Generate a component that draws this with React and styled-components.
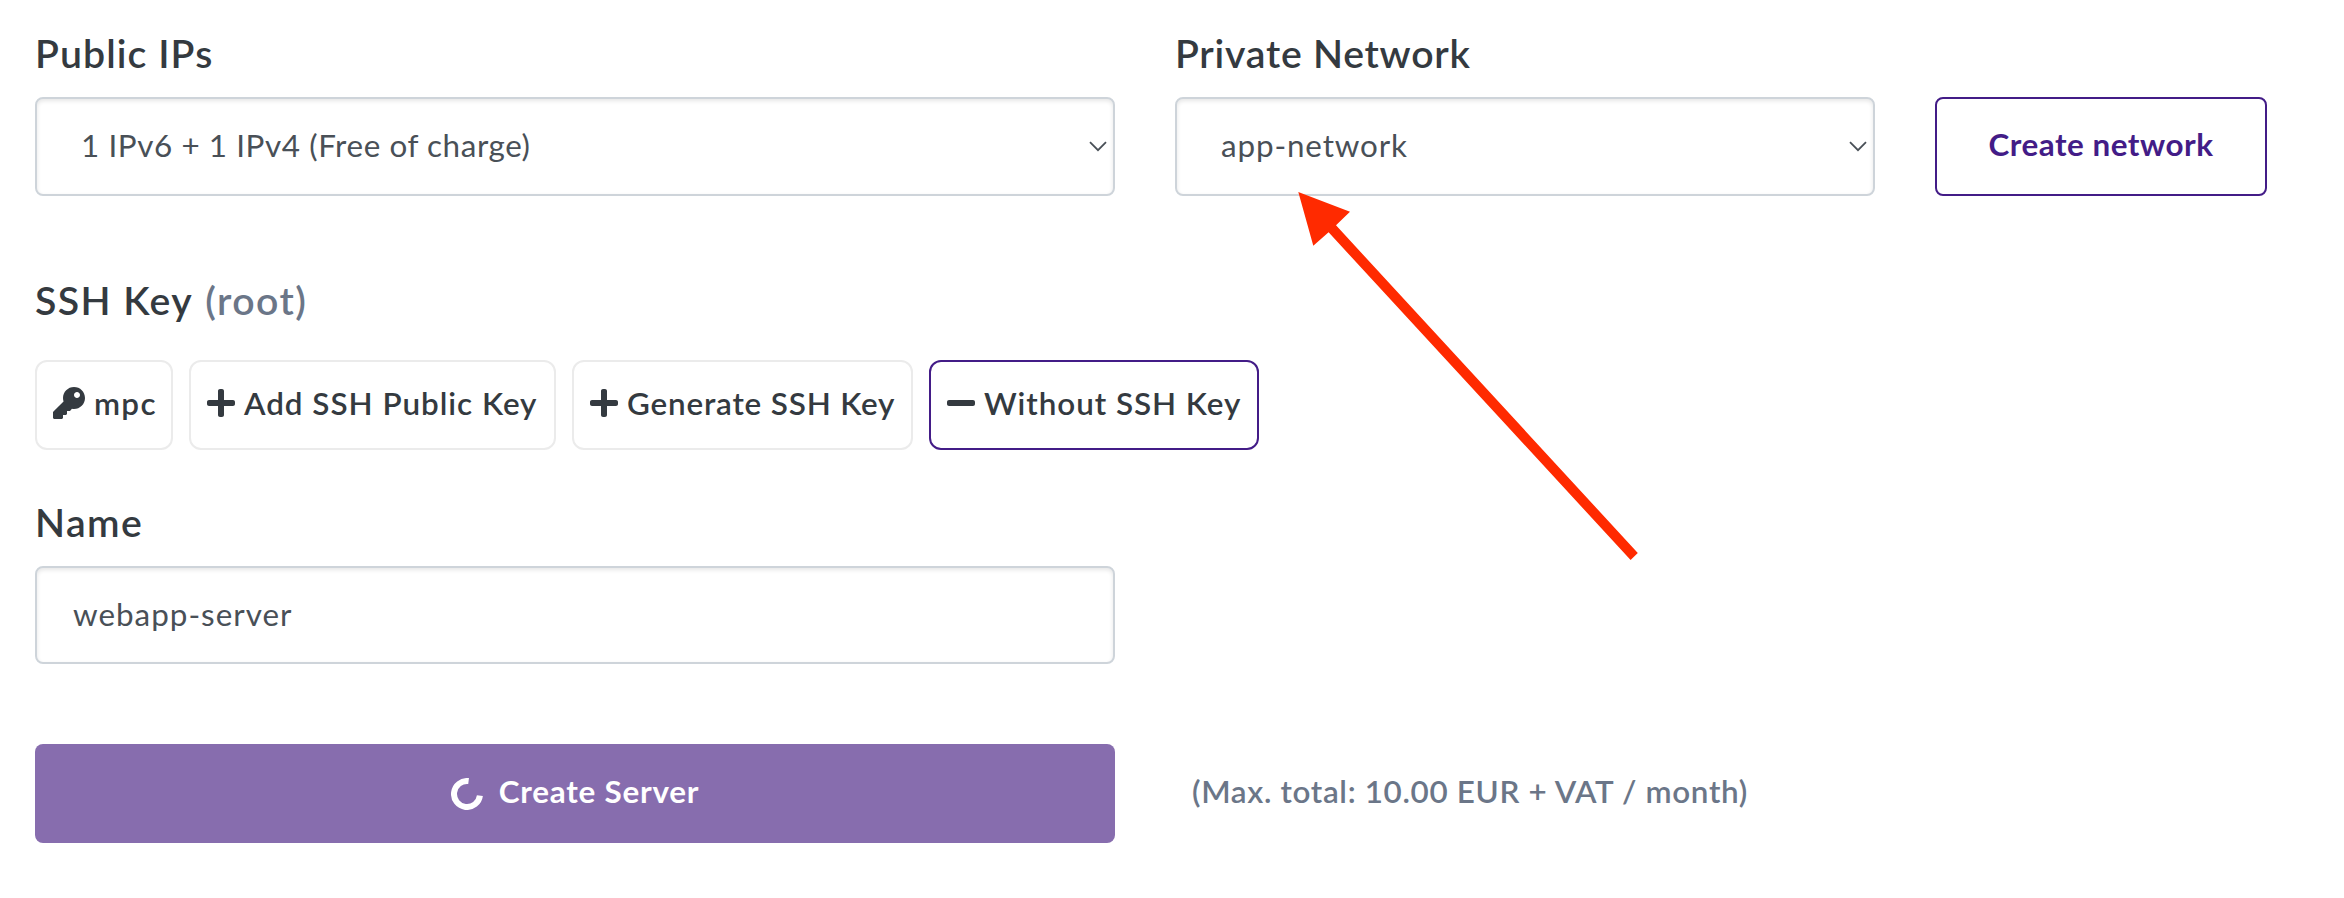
import styled, { createGlobalStyle } from "styled-components";
import { FaKey, FaMinus, FaPlus } from "react-icons/fa";

const GlobalStyle = createGlobalStyle`
  *,
  *::before,
  *::after {
    box-sizing: border-box;
  }

  body {
    margin: 0;
    background: #fff;
    color: #343a40;
    font-family: Lato, "Open Sans", sans-serif;
    font-size: 31.4px;
  }

  button,
  input {
    font: inherit;
    color: inherit;
  }
`;

const Form = styled.form`
  position: relative;
  width: 2344px;
  height: 898px;
  padding: 23px 77px 0 35px;
  overflow: hidden;
`;

const Row = styled.div`
  display: grid;
  grid-template-columns: 1080px 700px 332px;
  column-gap: 60px;
  align-items: end;
  margin-top: ${({ $top }) => $top || 0}px;
`;

const Title = styled.h2`
  margin: ${({ $top }) => $top || 0}px 0 ${({ $bottom }) => $bottom || 14}px;
  font-size: 39.2px;
  font-weight: 600;
  line-height: 60px;
  letter-spacing: ${({ $spacing }) => $spacing}px;
`;

const Muted = styled.span`
  margin-left: 2px;
  color: #6b7688;
`;

const SelectBox = styled.div`
  display: flex;
  align-items: center;
  justify-content: space-between;
  height: 99px;
  padding: 0 6px 0 44px;
  border: 2px solid #ced4da;
  border-radius: 8px;
  box-shadow: inset 0 2px 4px rgba(0, 0, 0, 0.1);
  color: #495057;
  letter-spacing: ${({ $spacing }) => $spacing}px;
`;

const SelectValue = styled.span`
  padding-bottom: 4px;
`;

const Input = styled.input`
  display: block;
  width: 1080px;
  height: 98px;
  padding: 0 36px 3px;
  border: 2px solid #ced4da;
  border-radius: 8px;
  box-shadow: inset 0 2px 4px rgba(0, 0, 0, 0.1);
  background: #fff;
  color: #495057;
  letter-spacing: 1px;
  outline: none;
`;

const OutlineButton = styled.button`
  height: 99px;
  padding: 0 0 5px;
  border: 2px solid #431c87;
  border-radius: 8px;
  background: #fff;
  color: #431c87;
  font-weight: 700;
  letter-spacing: 0.52px;
`;

const KeyList = styled.div`
  display: flex;
  gap: 16px;
`;

const KeyButton = styled.button`
  display: flex;
  align-items: center;
  gap: 9px;
  width: ${({ $width }) => $width}px;
  height: 90px;
  padding: 0 0 4px 16px;
  border: 2px solid ${({ $active }) => ($active ? "#431c87" : "#ebebeb")};
  border-radius: 12px;
  background: #fff;
  font-weight: 600;
  letter-spacing: ${({ $spacing }) => $spacing}px;
  white-space: nowrap;

  svg {
    flex: none;
    width: ${({ $iconWidth }) => $iconWidth || 28}px;
    height: 32px;
  }
`;

const SubmitButton = styled.button`
  display: flex;
  align-items: center;
  justify-content: center;
  gap: 16px;
  height: 99px;
  padding: 0;
  border: 0;
  border-radius: 8px;
  background: #876dae;
  color: #fff;
  font-weight: 700;
  letter-spacing: 0.76px;
`;

const SubmitLabel = styled.span`
  padding-bottom: 6px;
`;

const Total = styled.p`
  align-self: center;
  margin: 0;
  padding: 0 0 5px 17px;
  color: #6b7688;
  font-weight: 600;
  letter-spacing: 0.66px;
  white-space: nowrap;
`;

// Lies over the form and points at the private network select
const Arrow = styled.svg`
  position: absolute;
  left: 1290px;
  top: 184px;
  pointer-events: none;
`;

const keys = [
  { label: "mpc", icon: FaKey, width: 138, spacing: 1.3, iconWidth: 32 },
  { label: "Add SSH Public Key", icon: FaPlus, width: 367, spacing: 0.98 },
  { label: "Generate SSH Key", icon: FaPlus, width: 341, spacing: 0.82 },
  {
    label: "Without SSH Key",
    icon: FaMinus,
    width: 330,
    spacing: 0.95,
    active: true,
  },
];

function Chevron() {
  return (
    <svg width="18" height="12" viewBox="0 0 18 12" fill="none">
      <path d="M1 1.2L9 9.2L17 1.2" stroke="#495057" strokeWidth="1.8" />
    </svg>
  );
}

function Spinner() {
  return (
    <svg width="32" height="32" viewBox="0 0 32 32" fill="none">
      <path
        d="M28.9 17.6A13 13 0 1 1 17.6 3.1"
        stroke="#fff"
        strokeWidth="6"
      />
    </svg>
  );
}

function Select({ value, spacing }) {
  return (
    <SelectBox $spacing={spacing}>
      <SelectValue>{value}</SelectValue>
      <Chevron />
    </SelectBox>
  );
}

export default function App() {
  return (
    <>
      <GlobalStyle />
      <Form onSubmit={(event) => event.preventDefault()}>
        <Row>
          <div>
            <Title $spacing={1.08}>Public IPs</Title>
            <Select value="1 IPv6 + 1 IPv4 (Free of charge)" spacing={0.58} />
          </div>
          <div>
            <Title $spacing={0.75}>Private Network</Title>
            <Select value="app-network" spacing={0.87} />
          </div>
          <OutlineButton type="button">Create network</OutlineButton>
        </Row>

        <Title $top={74} $bottom={30} $spacing={1.4}>
          SSH Key <Muted>(root)</Muted>
        </Title>
        <KeyList>
          {keys.map((key) => (
            <KeyButton
              key={key.label}
              type="button"
              $width={key.width}
              $spacing={key.spacing}
              $iconWidth={key.iconWidth}
              $active={key.active}
            >
              <key.icon />
              {key.label}
            </KeyButton>
          ))}
        </KeyList>

        <Title $top={42} $spacing={1.4}>
          Name
        </Title>
        <Input name="name" defaultValue="webapp-server" spellCheck={false} />

        <Row $top={80}>
          <SubmitButton type="submit">
            <Spinner />
            <SubmitLabel>Create Server</SubmitLabel>
          </SubmitButton>
          <Total>(Max. total: 10.00 EUR + VAT / month)</Total>
        </Row>

        <Arrow width="360" height="390" viewBox="1290 184 360 390">
          <path
            d="M1298.3 192L1350 211.7L1336 225.3L1637.8 553L1630.6 560L1328.6 232.3L1313.3 245.7Z"
            fill="#ff2a00"
          />
        </Arrow>
      </Form>
    </>
  );
}
